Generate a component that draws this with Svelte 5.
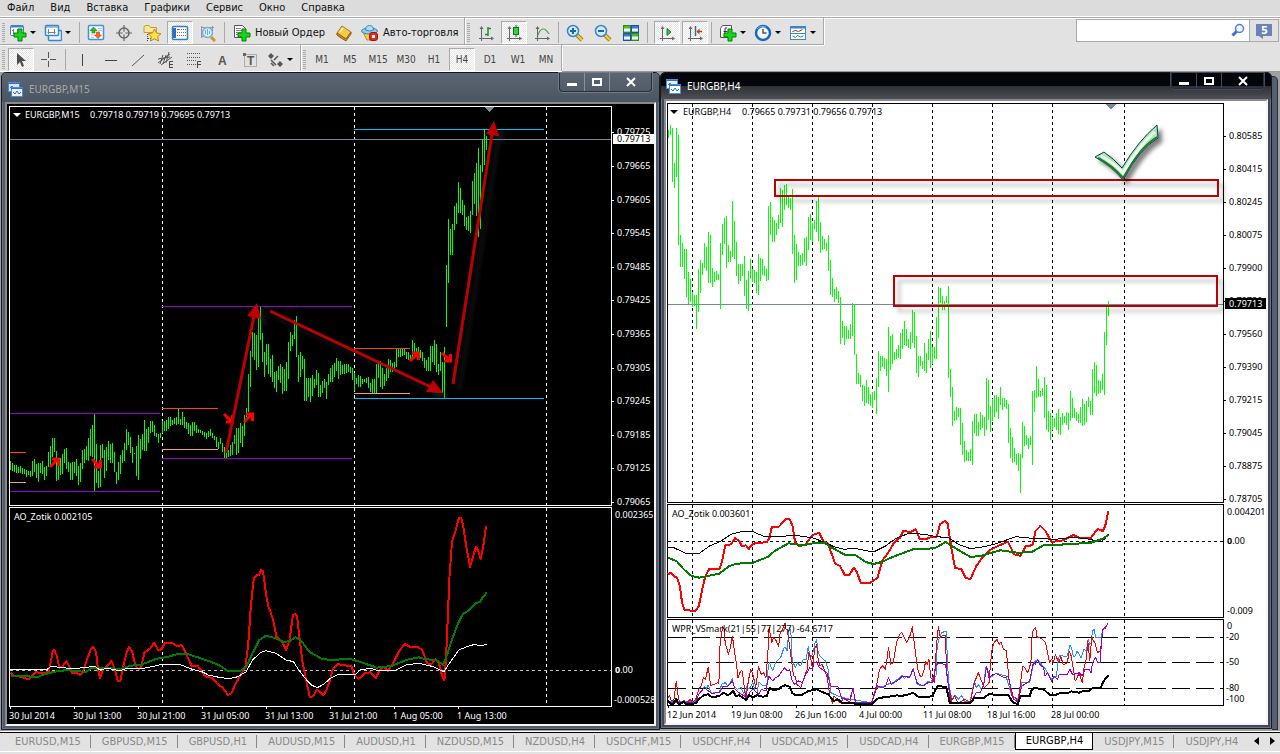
<script lang="ts">
  type Tool = { icon?: string; label?: string; title: string; drop?: boolean; pressed?: boolean; sep?: "thin" | "wide" };
  type Level = { x1: number; x2: number; y: number; color: string };

  const menu = ["Файл", "Вид", "Вставка", "Графики", "Сервис", "Окно", "Справка"];

  const standardBar: Tool[] = [
    { icon: "newchart", title: "Новый график", drop: true },
    { icon: "profiles", title: "Профили", drop: true, sep: "thin" },
    { icon: "market", title: "Обзор рынка" },
    { icon: "target", title: "Окно данных" },
    { icon: "navigator", title: "Навигатор" },
    { icon: "terminal", title: "Терминал", pressed: true },
    { icon: "tester", title: "Тестер стратегий", sep: "wide" },
    { icon: "order", title: "Новый Ордер", label: "Новый Ордер" },
    { icon: "book", title: "MetaEditor" },
    { icon: "auto", title: "Авто-торговля", label: "Авто-торговля" },
  ];

  const chartBar: Tool[] = [
    { icon: "bars", title: "Бары" },
    { icon: "candles", title: "Свечи", pressed: true },
    { icon: "line", title: "Линия", sep: "thin" },
    { icon: "zoomin", title: "Увеличить" },
    { icon: "zoomout", title: "Уменьшить" },
    { icon: "tile", title: "Выстроить окна", sep: "wide" },
    { icon: "scroll", title: "Автопрокрутка", pressed: true },
    { icon: "shift", title: "Сдвиг графика", pressed: true, sep: "wide" },
    { icon: "indicators", title: "Индикаторы", drop: true },
    { icon: "clock", title: "Периоды", drop: true },
    { icon: "template", title: "Шаблоны", drop: true },
  ];

  const lineBar: Tool[] = [
    { icon: "cursor", title: "Курсор", pressed: true },
    { icon: "cross", title: "Перекрестие", sep: "thin" },
    { icon: "vline", title: "Вертикальная линия" },
    { icon: "hline", title: "Горизонтальная линия" },
    { icon: "trend", title: "Трендовая линия" },
    { icon: "channel", title: "Равноудаленный канал" },
    { icon: "fibo", title: "Линии Фибоначчи" },
    { icon: "text", title: "Текст" },
    { icon: "label", title: "Текстовая метка" },
    { icon: "arrows", title: "Стрелки", drop: true },
  ];

  const periods = ["M1", "M5", "M15", "M30", "H1", "H4", "D1", "W1", "MN"];
  let period = $state("H4");

  const tabs = [
    "EURUSD,M15", "GBPUSD,M15", "GBPUSD,H1", "AUDUSD,M15", "AUDUSD,H1", "NZDUSD,M15", "NZDUSD,H4",
    "USDCHF,M15", "USDCHF,H4", "USDCAD,M15", "USDCAD,H4", "EURGBP,M15", "EURGBP,H4", "USDJPY,M15", "USDJPY,H4",
  ];
  let activeTab = $state("EURGBP,H4");

  // high/low pairs, one bar every two units
  const m15Bars = [
    461,470, 463,471, 465,472, 465,473, 467,473, 466,473, 468,474, 469,474, 470,477, 471,475, 471,477, 461,476,
    459,472, 464,478, 463,482, 463,473, 461,474, 467,480, 466,476, 452,467, 446,467, 438,457, 438,452, 451,481,
    458,480, 458,475, 454,474, 449,463, 448,469, 462,472, 463,480, 462,480, 462,473, 459,476, 466,485, 463,482,
    450,469, 449,463, 446,460, 438,461, 429,456, 425,457, 413,492, 444,483, 471,488, 445,487, 444,458, 450,478,
    447,471, 441,460, 444,463, 443,463, 452,472, 472,484, 462,480, 455,474, 450,463, 443,461, 429,450, 432,445,
    437,453, 447,463, 453,454, 446,476, 435,480, 439,459, 434,450, 420,451, 429,451, 427,443, 421,433, 421,432,
    425,436, 433,437, 434,443, 433,438, 421,433, 421,431, 420,431, 417,429, 417,426, 420,425, 418,424, 417,425,
    408,424, 419,425, 412,425, 417,428, 422,429, 423,434, 425,436, 422,436, 422,431, 425,433, 429,433, 430,433,
    431,435, 432,437, 433,439, 431,437, 429,436, 433,438, 436,440, 437,447, 442,449, 438,444, 443,452, 447,458,
    447,458, 450,457, 445,456, 442,455, 435,444, 428,455, 428,453, 423,443, 426,447, 415,436, 408,417, 374,412,
    351,387, 332,357, 333,360, 335,370, 317,367, 306,340, 333,362, 352,377, 344,365, 344,374, 359,377, 355,382,
    372,388, 371,392, 366,380, 364,383, 367,394, 369,391, 362,391, 342,379, 332,351, 335,346, 320,339, 316,357,
    355,382, 352,377, 356,369, 359,401, 378,401, 378,397, 378,402, 375,396, 379,388, 370,385, 373,397, 385,397,
    381,393, 379,388, 382,399, 374,385, 368,382, 365,382, 363,377, 358,371, 361,379, 361,375, 365,374, 364,374,
    364,373, 364,372, 367,373, 368,380, 373,391, 378,384, 375,387, 376,387, 379,384, 379,382, 378,383, 377,388,
    383,392, 379,393, 379,393, 364,393, 363,378, 361,387, 368,389, 374,386, 368,381, 359,378, 360,372, 363,372,
    362,369, 349,367, 349,357, 349,357, 349,356, 348,355, 352,359, 352,360, 355,361, 340,360, 343,353, 348,353,
    347,360, 350,358, 352,361, 358,368, 360,371, 357,371, 346,371, 346,362, 340,365, 344,372, 364,375, 352,371,
    362,393, 347,399, 265,327, 219,283, 229,255, 224,255, 206,230, 203,224, 182,213, 188,213, 200,215, 205,226,
    217,230, 216,231, 211,233, 181,215, 173,204, 163,216, 148,237, 165,229, 139,172, 129,165, 136,150,
  ];

  const h4Bars = [
    130,138, 125,135, 128,182, 163,188, 128,177, 135,245, 235,267, 243,267, 249,279, 249,297, 272,304, 279,302,
    292,307, 295,306, 295,329, 269,312, 260,293, 263,275, 243,268, 247,271, 232,283, 235,283, 268,287, 272,282,
    271,280, 274,280, 243,309, 224,255, 218,244, 216,268, 245,262, 251,262, 201,257, 221,259, 242,276, 264,284,
    264,281, 264,276, 256,296, 280,309, 271,311, 259,279, 269,282, 270,283, 272,293, 254,295, 258,281, 259,275,
    266,276, 269,281, 206,280, 202,235, 217,242, 220,242, 223,235, 215,229, 188,223, 190,227, 185,210, 184,205,
    196,208, 198,210, 189,254, 235,283, 244,280, 252,266, 255,266, 253,265, 238,262, 237,266, 217,250, 214,240,
    223,242, 220,229, 201,232, 196,241, 222,253, 236,250, 239,249, 243,251, 235,271, 260,295, 278,297, 289,302,
    287,299, 291,303, 297,344, 321,338, 326,345, 326,339, 330,339, 324,339, 303,336, 305,355, 354,384, 373,384,
    375,387, 385,401, 386,406, 380,403, 387,404, 394,406, 392,408, 391,400, 378,414, 351,387, 356,371, 356,367,
    358,369, 359,376, 327,392, 336,370, 334,364, 352,360, 349,359, 345,358, 333,359, 329,349, 321,345, 329,346,
    339,348, 332,349, 310,343, 312,348, 336,373, 356,377, 356,366, 361,369, 343,371, 353,373, 339,360, 331,368,
    347,364, 347,359, 317,359, 287,338, 288,303, 296,310, 301,310, 296,303, 286,378, 369,397, 387,426, 411,421,
    407,420, 408,417, 408,445, 423,455, 441,462, 450,461, 452,461, 449,461, 421,465, 414,433, 414,436, 422,436,
    412,430, 415,428, 417,436, 378,430, 380,420, 406,432, 399,421, 395,417, 395,412, 397,419, 387,405, 398,410,
    398,407, 400,409, 404,443, 428,458, 437,463, 448,462, 454,465, 453,471, 454,493, 422,458, 426,446, 435,445,
    438,449, 436,445, 391,465, 390,412, 366,398, 379,397, 391,397, 388,396, 377,418, 385,430, 411,432, 413,440,
    417,430, 418,427, 413,430, 409,434, 417,435, 413,425, 416,423, 412,425, 413,430, 391,421, 398,418, 408,418,
    412,421, 414,423, 407,423, 399,426, 404,425, 401,422, 397,407, 401,415, 369,415, 362,393, 365,396, 380,394,
    381,393, 374,390, 332,395, 306,345, 301,316,
  ];

  const m15Red = [25,518,33,528,50,530,68,538,85,516,100,520,115,516,120,490,125,455,129,449,135,468,141,503,148,500,158,484,165,500,172,520,180,518,190,524,197,515,207,478,215,450,222,440,228,455,233,510,238,534,245,507,255,498,265,482,272,505,280,543,286,542,292,505,300,460,307,441,314,455,322,498,330,508,336,498,343,458,357,445,366,428,376,450,384,448,391,430,410,430,420,438,432,436,440,455,455,497,470,498,487,528,505,535,515,550,528,562,542,585,550,580,560,550,572,525,583,500,590,430,596,320,603,235,610,225,616,224,620,211,625,213,633,290,638,320,648,355,657,410,670,425,680,450,688,420,696,345,702,342,706,350,712,420,718,480,728,545,736,592,745,588,752,570,758,572,768,586,775,572,783,545,790,510,802,492,815,496,835,498,842,525,852,537,866,520,880,517,893,535,902,510,910,500,922,513,936,485,950,450,962,433,975,441,992,440,1003,450,1015,490,1024,494,1035,478,1043,490,1050,525,1056,541,1060,470,1063,380,1068,230,1074,125,1082,95,1090,55,1096,55,1100,75,1108,140,1117,200,1125,165,1131,140,1137,155,1142,177,1148,140,1155,78];
  const m15Green = [25,528,60,528,88,532,100,525,130,515,160,510,180,514,205,515,218,503,230,506,260,503,285,508,310,497,335,494,350,487,372,476,400,470,420,463,445,462,470,472,500,485,520,495,540,512,570,514,585,500,600,460,616,420,632,407,655,415,675,427,690,422,702,412,715,422,735,455,765,477,790,480,830,476,855,485,895,503,930,498,965,480,995,472,1010,477,1040,482,1053,495,1062,465,1075,415,1090,365,1100,342,1115,330,1130,310,1140,306,1148,290,1157,277];
  const m15White = [25,508,60,510,90,508,110,510,120,500,150,502,165,506,200,503,225,499,235,508,260,506,285,512,300,506,325,507,350,503,385,493,430,495,455,507,480,515,495,525,520,532,545,536,565,530,585,515,600,480,620,457,632,452,655,460,680,480,697,485,710,510,725,535,740,555,754,563,770,552,785,535,805,522,845,524,855,510,880,505,900,513,940,511,965,495,995,490,1030,500,1055,516,1065,495,1090,450,1110,440,1128,433,1140,438,1156,433];

  const h4Red = [20,235,28,230,35,240,43,245,50,270,56,320,62,343,90,344,98,330,106,285,114,243,124,220,150,220,157,195,165,148,180,145,190,126,200,135,207,150,217,148,225,158,235,143,270,138,277,125,283,92,300,93,318,70,328,70,335,90,342,140,352,150,368,147,385,118,402,110,413,135,425,143,433,170,443,203,455,210,468,238,478,238,490,215,498,228,508,262,530,262,550,245,562,195,580,165,592,140,607,125,615,105,633,108,647,100,657,130,672,130,685,123,700,122,708,85,720,75,728,85,736,150,746,215,762,220,773,245,785,250,800,210,815,185,835,162,855,150,880,137,895,175,912,180,925,150,942,148,950,105,962,90,975,105,990,138,1020,133,1045,117,1060,125,1090,125,1107,99,1120,105,1126,90,1134,45];
  const h4Green = [20,185,42,195,60,220,80,240,100,245,120,240,150,233,175,210,195,203,235,200,272,183,290,165,325,142,360,148,395,140,415,140,435,155,470,178,495,178,520,198,540,204,560,198,590,182,640,160,695,157,722,138,745,155,785,183,810,180,860,163,905,170,940,168,970,148,1030,145,1090,140,1120,128,1134,117];
  const h4Black = [20,156,35,155,65,172,100,172,125,150,150,138,180,115,210,106,235,107,265,122,300,122,340,118,385,125,415,138,440,152,465,160,490,157,540,168,570,150,600,125,630,112,670,115,700,122,730,125,755,145,785,158,820,152,850,143,900,122,940,127,1000,130,1045,124,1080,128,1115,138,1125,128,1134,115];

  const wprRed = [20,605,24,598,28,612,35,615,41,555,47,610,52,622,60,612,66,622,76,610,82,620,90,610,98,580,104,570,110,545,115,550,122,514,128,568,136,566,145,560,149,562,152,440,156,412,158,392,162,400,165,440,173,475,178,455,183,420,190,480,193,500,197,545,202,530,207,522,212,560,217,610,224,550,230,520,236,540,242,575,249,512,256,535,262,530,268,545,273,470,276,395,283,440,287,425,292,430,300,452,304,410,308,405,316,380,319,402,322,400,330,470,338,540,342,540,346,565,356,575,365,545,372,520,376,470,380,480,386,520,391,460,396,445,400,490,405,510,410,505,415,520,422,540,430,600,436,622,440,600,445,605,455,620,464,608,480,618,488,575,494,618,535,622,545,580,550,555,555,520,563,510,570,520,574,490,578,455,584,505,590,500,598,440,606,415,611,410,616,420,624,440,632,420,638,392,645,460,652,520,658,540,663,540,668,520,672,495,676,505,680,490,685,545,694,560,699,450,704,392,709,425,716,418,721,418,726,540,735,618,745,600,750,614,755,622,770,610,785,618,795,560,805,530,820,575,832,560,836,500,840,460,845,440,852,430,858,445,862,438,868,458,876,465,882,545,890,600,895,612,900,605,905,618,912,560,917,510,922,515,930,530,938,500,941,420,944,400,950,395,954,425,958,425,966,428,975,440,985,500,990,490,995,500,1000,475,1008,500,1014,482,1020,507,1030,500,1035,465,1040,480,1045,515,1050,555,1055,545,1060,530,1068,560,1073,510,1078,490,1082,435,1087,495,1092,420,1096,435,1100,440,1106,470,1114,465,1120,400,1126,398,1133,382];
  const wprBlue = [20,615,55,618,90,615,100,590,106,585,112,572,117,578,122,568,130,592,150,588,156,565,165,560,172,570,183,548,187,570,195,580,205,575,215,600,220,570,225,580,235,560,240,585,245,590,250,558,260,570,270,568,274,510,277,500,285,525,292,500,300,490,306,482,312,460,316,452,322,465,325,410,328,395,331,410,334,490,342,515,348,500,355,510,362,492,370,490,375,450,380,490,388,465,392,440,396,432,400,470,405,480,412,488,418,495,425,520,432,590,450,600,480,610,535,620,548,575,562,572,575,565,590,560,600,550,607,545,613,538,618,548,625,540,632,545,640,518,645,540,650,565,665,570,672,562,680,555,686,560,690,545,698,540,701,450,704,435,712,410,724,405,727,500,730,560,738,610,746,598,755,610,762,598,770,615,785,615,790,580,795,555,800,575,805,565,812,580,818,570,825,510,835,545,850,532,875,540,890,600,905,610,915,560,935,560,945,500,955,490,975,520,990,550,1003,540,1006,500,1010,478,1018,480,1030,480,1037,447,1041,455,1045,480,1050,480,1055,465,1060,475,1065,485,1072,460,1078,465,1083,430,1087,445,1090,440,1094,405,1098,400,1102,425,1115,425,1120,400];
  const wprPurple = [20,618,90,618,98,595,112,575,130,592,150,590,160,570,172,570,183,555,190,580,200,590,218,605,228,588,235,580,250,595,256,580,268,585,275,540,285,555,292,545,300,540,307,528,315,515,322,525,328,520,333,550,340,565,350,555,360,560,366,540,372,530,378,515,385,520,390,500,396,497,403,515,410,520,422,530,432,570,450,572,460,608,480,610,488,580,495,620,535,620,550,570,562,575,570,572,578,545,585,565,595,558,605,550,613,540,620,540,630,545,640,520,650,560,665,570,678,560,690,560,697,510,703,502,722,505,728,560,738,618,785,620,800,590,810,590,820,560,826,510,832,545,840,538,850,532,870,545,880,540,895,610,905,618,915,570,935,555,942,510,945,500,950,505,955,490,960,505,970,515,974,540,980,530,990,555,996,540,1005,550,1010,535,1030,535,1037,520,1043,535,1060,530,1068,540,1075,520,1085,520,1090,530,1094,500,1098,490,1102,485,1107,500,1113,500,1117,430,1120,400,1133,383];
  const wprBlack = [20,615,28,625,33,625,41,608,47,625,60,618,68,625,90,622,100,608,110,598,122,595,132,604,150,600,160,590,172,598,185,585,192,600,200,598,218,612,225,598,235,604,245,598,260,602,270,600,277,575,285,582,300,580,306,573,316,568,328,572,334,590,340,596,360,596,375,585,396,580,410,588,425,595,440,615,450,610,460,622,488,620,495,625,535,625,550,608,565,604,580,602,600,598,610,600,625,596,640,590,655,604,670,604,690,600,697,580,703,570,724,573,729,600,733,620,785,622,795,605,820,605,832,594,850,597,880,596,890,615,895,620,905,625,912,600,935,600,940,582,945,576,970,580,985,596,1000,597,1010,592,1030,592,1040,586,1060,590,1072,584,1085,585,1095,575,1115,575,1120,560,1125,550,1134,538];

  function barPath(bars: number[], x0: number): string {
    let d = "";
    for (let i = 0; i < bars.length; i += 2) {
      d += `M${x0 + i + 0.5} ${bars[i]}V${bars[i + 1]}`;
    }
    return d;
  }

  // indicator samples are stored in a finer unit than the bars
  function trace(pts: number[], x0: number, y0: number, unit: number): string {
    const out: string[] = [];
    for (let i = 0; i < pts.length; i += 2) {
      out.push(`${(x0 + pts[i] / unit).toFixed(1)},${(y0 + pts[i + 1] / 3).toFixed(1)}`);
    }
    return out.join(" ");
  }

  const m15Levels: Level[] = [
    { x1: 10, x2: 160, y: 413, color: "#9400d3" },
    { x1: 10, x2: 160, y: 491, color: "#9400d3" },
    { x1: 10, x2: 26, y: 452, color: "#ff4500" },
    { x1: 10, x2: 26, y: 482, color: "#f4a460" },
    { x1: 162, x2: 352, y: 306, color: "#9400d3" },
    { x1: 162, x2: 352, y: 458, color: "#9400d3" },
    { x1: 162, x2: 218, y: 408, color: "#ff4500" },
    { x1: 162, x2: 218, y: 449, color: "#f4a460" },
    { x1: 354, x2: 544, y: 129, color: "#00bfff" },
    { x1: 354, x2: 544, y: 398, color: "#00bfff" },
    { x1: 354, x2: 410, y: 348, color: "#ff4500" },
    { x1: 354, x2: 410, y: 393, color: "#f4a460" },
  ];

  const m15Prices: [string, number][] = [
    ["0.79725", 132], ["0.79665", 166], ["0.79605", 200], ["0.79545", 233], ["0.79485", 267], ["0.79425", 300],
    ["0.79365", 334], ["0.79305", 368], ["0.79245", 401], ["0.79185", 435], ["0.79125", 468], ["0.79065", 502],
  ];
  const h4Prices: [string, number][] = [
    ["0.80585", 136], ["0.80415", 169], ["0.80245", 202], ["0.80075", 235], ["0.79900", 268], ["0.79730", 301],
    ["0.79560", 334], ["0.79390", 367], ["0.79215", 400], ["0.79045", 433], ["0.78875", 466], ["0.78705", 499],
  ];
  const m15Times = ["30 Jul 2014", "30 Jul 13:00", "30 Jul 21:00", "31 Jul 05:00", "31 Jul 13:00", "31 Jul 21:00", "1 Aug 05:00", "1 Aug 13:00"];
  const h4Times = ["12 Jun 2014", "19 Jun 08:00", "26 Jun 16:00", "4 Jul 00:00", "11 Jul 08:00", "18 Jul 16:00", "28 Jul 00:00"];

  const m15Grid = [162, 354, 546];
  const h4Grid = [692, 752, 812, 872, 932, 992, 1052, 1124];

  const signals = [
    { x: 49, y: 457, up: true },
    { x: 91, y: 458, up: false },
    { x: 223, y: 413, up: false },
    { x: 243, y: 412, up: true },
    { x: 409, y: 351, up: true },
    { x: 441, y: 352, up: false },
  ];
</script>

{#snippet plus(x: number, y: number)}
  <path d="M{x + 4} {y}h4v4h4v4h-4v4h-4v-4h-4v-4h4z" fill="#16d916" stroke="#087a12" />
{/snippet}

{#snippet axes()}
  <path d="M4.5 3v14M2 14.500h14" stroke="#666" fill="none" />
  <path d="M2.500 5l2-3 2 3zM14 12.500l3 2-3 2z" fill="#666" />
{/snippet}

{#snippet lens(sign: string)}
  <path d="M11 11l5 5" stroke="#8a6a10" stroke-width="4" />
  <path d="M11 11l5 5" stroke="#f0c83c" stroke-width="2.500" />
  <circle cx="7" cy="7" r="5.500" fill="#c9ecff" stroke="#3b83c4" stroke-width="1.500" />
  <path d={sign} stroke="#2160a8" stroke-width="2" />
{/snippet}

{#snippet icon(name: string)}
  <svg class="icon" viewBox="0 0 18 18" width="18" height="18" aria-hidden="true">
    {#if name === "newchart"}
      <rect x="1.500" y="1.500" width="13" height="10" rx="1" fill="#fff" stroke="#3a86c8" />
      <path d="M2 2.500h12" stroke="#3a86c8" stroke-width="2" />
      <path d="M4.500 5v5M3 6.500h2M8.500 5v5M8 8.500h2" stroke="#6e8494" />
      {@render plus(5, 5)}
    {:else if name === "profiles"}
      <rect x="4.500" y="6.500" width="13" height="10" rx="1" fill="#e8f4ff" stroke="#3a86c8" stroke-width="1.500" />
      <rect x="1.500" y="1.500" width="13" height="10" rx="1" fill="#fff" stroke="#3a86c8" stroke-width="1.500" />
      <path d="M2 3h12" stroke="#3a86c8" />
      <path d="M4.500 5v5M3.500 8.500h8M10.500 5v5" stroke="#6e8494" />
    {:else if name === "market"}
      <rect x="1.500" y="1.500" width="15" height="14" rx="1" fill="#fff" stroke="#3f93d8" stroke-width="1.500" />
      <path d="M4 11h3M4 13.500h3M11 4.500h4M11 6.500h4" stroke="#b8c4cc" />
      <path d="M6.500 3l3.500 3.500H8V9H5V6.500H3z" fill="#31b531" stroke="#137313" stroke-width=".6" />
      <path d="M11 14.500L7.500 11H9.500V8h3v3h2z" fill="#ff6a28" stroke="#b23a08" stroke-width=".6" />
    {:else if name === "target"}
      <circle cx="9" cy="9" r="5" fill="none" stroke="#666" stroke-width="1.500" />
      <path d="M9 1v16M1 9h16" stroke="#666" stroke-width="1.200" />
      <circle cx="9" cy="9" r="1.500" fill="#e2e2e2" />
    {:else if name === "navigator"}
      <path d="M1 3.500q0-2 2-2h3l1.500 2h6v5H1z" fill="#fbe69a" stroke="#c99a26" />
      <path d="M4.500 10v7M5 14.500h3" stroke="#444" stroke-dasharray="1 1" />
      <path d="M11.500 5l2 4 4.500.6-3.300 3 .8 4.400-4-2.200-4 2.200.8-4.400-3.300-3 4.500-.6z" fill="#ffdf4e" stroke="#b98a16" />
    {:else if name === "terminal"}
      <rect x="1.500" y="2.500" width="15" height="13" rx="1" fill="#fff" stroke="#2c7fc9" stroke-width="1.500" />
      <path d="M3.500 4v10" stroke="#2c6fb4" stroke-width="3" />
      <path d="M6 5.500h2M6 8.500h1M6 11.500h1" stroke="#e03030" />
      <path d="M8 5.500h7M8 8.500h7M8 11.500h7" stroke="#777" stroke-dasharray="1 1" />
    {:else if name === "tester"}
      <path d="M2.500 2v12M2 3.500h13M13.500 2v9M2 12.500h8" stroke="#8b98a4" />
      <path d="M12 13l4 4" stroke="#c99a20" stroke-width="3" />
      <circle cx="8.500" cy="8.500" r="5" fill="#d4edfb" stroke="#7aaed6" stroke-width="1.500" />
      <path d="M6.500 6v4M8.500 5v6M10.500 7v3" stroke="#7da8c4" />
    {:else if name === "order"}
      <path d="M1.500 1.500h8l3 3v9h-11z" fill="#fff" stroke="#555" />
      <path d="M3 4.500h5M3 6.500h7M3 8.500h5M3 10.500h4" stroke="#888" />
      {@render plus(5, 5)}
    {:else if name === "book"}
      <path d="M2 9l5-7 9 6-5 7z" fill="#f5ca4a" stroke="#a87812" />
      <path d="M2 9q-1 2 1 3l8 5 5-7v-2l-5 7z" fill="#c98e18" stroke="#8f6410" />
      <path d="M5 8l3-4" stroke="#fff0b0" stroke-width="1.500" />
    {:else if name === "auto"}
      <path d="M2 8h13l-4 8H6z" fill="#f6cf42" stroke="#b58a18" />
      <ellipse cx="8.500" cy="7" rx="8" ry="3" fill="#8fcdf0" stroke="#3c86b8" />
      <path d="M4.500 6q0-4.500 4-4.500t4 4.500q-4 2-8 0z" fill="#a9def8" stroke="#3c86b8" />
      <rect x="8.500" y="8.500" width="8" height="8" rx="2.500" fill="#e22c1c" stroke="#a01208" />
      <rect x="11" y="11" width="3" height="3" fill="#fff" />
    {:else if name === "bars"}
      {@render axes()}
      <path d="M11 3v9M11 4.500h3M8 10.500h3" stroke="#15962a" stroke-width="1.500" />
    {:else if name === "candles"}
      {@render axes()}
      <path d="M11 1v12" stroke="#0b7a1c" />
      <rect x="8.500" y="3.500" width="5" height="7" fill="#31d43c" stroke="#0b7a1c" />
    {:else if name === "line"}
      {@render axes()}
      <path d="M5 11q2-6 5-6t6 5" stroke="#4ea052" stroke-width="1.200" fill="none" />
    {:else if name === "zoomin"}
      {@render lens("M4 7h6M7 4v6")}
    {:else if name === "zoomout"}
      {@render lens("M4 7h6")}
    {:else if name === "tile"}
      <rect x="1.500" y="1.500" width="7" height="7" fill="#4cba2c" stroke="#2f8f14" />
      <rect x="9.500" y="1.500" width="7" height="7" fill="#3d74d8" stroke="#1f4fae" />
      <rect x="1.500" y="9.500" width="7" height="7" fill="#3d74d8" stroke="#1f4fae" />
      <rect x="9.500" y="9.500" width="7" height="7" fill="#4cba2c" stroke="#2f8f14" />
      <path d="M2 6h6M10 6h6M2 14h6M10 14h6" stroke="#eef6ff" stroke-width="3" />
    {:else if name === "scroll"}
      {@render axes()}
      <path d="M9 4.500l4 3.500-4 3.500z" fill="#3cc44a" stroke="#0f8020" />
    {:else if name === "shift"}
      {@render axes()}
      <path d="M9.500 2v10" stroke="#2a6f96" stroke-width="1.500" />
      <path d="M11 7.500h5" stroke="#b03a10" stroke-width="1.500" />
      <path d="M10.500 7.500l3-3v6z" fill="#d2400e" />
    {:else if name === "indicators"}
      <path d="M3.500 1.500h9v12h-11v-9z" fill="#fff" stroke="#555" />
      <path d="M8 4q-2-1-2 1v6M4.500 7.500h4" stroke="#333" fill="none" />
      {@render plus(5, 5)}
    {:else if name === "clock"}
      <circle cx="9" cy="9" r="7" fill="#eef7ff" stroke="#1767bd" stroke-width="2.500" />
      <path d="M3 5q3-4 9-2" stroke="#6cb6f2" fill="none" />
      <path d="M9 5v4h3.500" stroke="#555" stroke-width="1.500" fill="none" />
    {:else if name === "template"}
      <rect x="1.500" y="2.500" width="15" height="13" fill="#fff" stroke="#3a86c8" />
      <path d="M1 3.500h16" stroke="#3a86c8" stroke-width="2" />
      <path d="M2 9.500h14" stroke="#3a86c8" />
      <path d="M3.500 7.500l3-1 3 1 4-2" stroke="#a0342c" fill="none" />
      <path d="M3.500 12l3 1.500 2-2 3 1.500 3-1" stroke="#2a9a3c" fill="none" />
    {:else if name === "cursor"}
      <path d="M5 2v12l3-3 2 5 2-1-2-5h4z" fill="#4c4c4c" />
    {:else if name === "cross"}
      <path d="M8.500 1v6M8.500 10v6M1 8.500h6M10 8.500h6" stroke="#555" />
    {:else if name === "vline"}
      <path d="M9.500 3v12" stroke="#444" />
    {:else if name === "hline"}
      <path d="M4 9.500h12" stroke="#444" />
    {:else if name === "trend"}
      <path d="M3 15L15 4" stroke="#555" />
    {:else if name === "channel"}
      <path d="M1 12L13 3M4 14l11-8M1 8l12-2M3 13l3-9M6 13l3-9M9 12l3-11" stroke="#555" />
      <path d="M16 10.500h-3.500v6H16M13 13.500h3" stroke="#444" fill="none" />
    {:else if name === "fibo"}
      <path d="M2 2.500h14M2 6.500h14M2 9.500h9M2 13.500h9" stroke="#555" stroke-dasharray="1 1" />
      <path d="M16 10.500h-3.500V17M13 13.500h3" stroke="#444" fill="none" />
    {:else if name === "text"}
      <text x="5" y="14" class="glyph">A</text>
    {:else if name === "label"}
      <rect x="3.500" y="3.500" width="12" height="12" fill="none" stroke="#777" stroke-dasharray="1 1" />
      <rect x="2" y="2" width="3" height="3" fill="#666" />
      <text x="6" y="14" class="glyph">T</text>
    {:else if name === "arrows"}
      <path d="M5 2l3 3-3 3-3-3zM14 10l3 3-3 3-3-3z" fill="#555" />
      <path d="M8 9l4-4M5 9l5 5M5 12l3 3" stroke="#555" stroke-width="1.500" fill="none" />
    {/if}
  </svg>
{/snippet}

{#snippet toolbar(items: Tool[], name: string)}
  <div class="toolbar" role="toolbar" aria-label={name}>
    <span class="grip"></span>
    {#each items as t (t.title)}
      <button type="button" class="tool" class:drop={t.drop} class:labelled={t.label} class:pressed={t.pressed} title={t.title} aria-label={t.title}>
        {@render icon(t.icon ?? "")}
        {#if t.label}<span>{t.label}</span>{/if}
        {#if t.drop}<span class="caret"></span>{/if}
      </button>
      {#if t.sep}<span class="sep {t.sep}"></span>{/if}
    {/each}
  </div>
{/snippet}

{#snippet titleBar(name: string)}
  <header class="title">
    <svg viewBox="0 0 15 15" width="15" height="15" aria-hidden="true">
      <rect x=".5" y=".5" width="11" height="9" fill="#e8f2ff" stroke="#4d8fe0" />
      <path d="M0 1.500h12M2 6l2-2 2 3 2-2" stroke="#2f6fd0" fill="none" />
      <rect x="3.500" y="5.500" width="11" height="9" fill="#fff" stroke="#4d8fe0" />
      <path d="M3 6.500h12M5 10l2 2 2-3 2 3 2-2" stroke="#2f6fd0" fill="none" />
    </svg>
    <h2>{name}</h2>
    <div class="controls">
      <button type="button" aria-label="Свернуть"><svg viewBox="0 0 12 10" width="12" height="10"><path d="M1 7.500h10" stroke="#fff" stroke-width="3" /></svg></button>
      <button type="button" aria-label="Развернуть"><svg viewBox="0 0 12 10" width="12" height="10"><rect x="2" y="2" width="8" height="6" fill="none" stroke="#fff" stroke-width="2" /></svg></button>
      <button type="button" class="close" aria-label="Закрыть"><svg viewBox="0 0 12 10" width="12" height="10"><path d="M2 1l8 8M10 1L2 9" stroke="#fff" stroke-width="2" /></svg></button>
    </div>
  </header>
{/snippet}

{#snippet priceAxis(prices: [string, number][], x: number)}
  {#each prices as [price, y] (price)}
    <path d="M{x} {y + 0.5}h3" class="ink" />
    <text x={x + 6} y={y + 3}>{price}</text>
  {/each}
{/snippet}

{#snippet timeAxis(times: string[], x: number, y: number)}
  {#each times as time, i (time)}
    <path d="M{x + i * 64 + 0.5} {y}v3" class="ink" />
    <text x={x + i * 64 - 1} y={y + 13}>{time}</text>
  {/each}
{/snippet}

<div class="terminal">
  <nav class="menu">
    {#each menu as item (item)}
      <button type="button">{item}</button>
    {/each}
  </nav>

  <div class="bars">
    <div class="bar-rows">
      <div class="bar-row">
        {@render toolbar(standardBar, "Стандартная")}
        {@render toolbar(chartBar, "Графики")}
      </div>
      <div class="bar-row">
        {@render toolbar(lineBar, "Инструменты")}
        <div class="toolbar" role="toolbar" aria-label="Периоды">
          <span class="grip"></span>
          {#each periods as p (p)}
            <button type="button" class="tool period" class:pressed={period === p} onclick={() => (period = p)}>{p}</button>
          {/each}
        </div>
      </div>
    </div>
    <form class="search" onsubmit={(e) => e.preventDefault()}>
      <input type="search" aria-label="Поиск" />
      <svg class="search-icon" viewBox="0 0 14 14" width="14" height="14" aria-hidden="true">
        <path d="M1.500 12.500L6 8" stroke="#3a6fd8" stroke-width="3" />
        <circle cx="8.500" cy="5.500" r="4" fill="#f4f9ff" stroke="#4a7ee0" stroke-width="1.500" />
      </svg>
      <button type="button" class="chat" aria-label="Сообщения: 5">
        <svg viewBox="0 0 18 18" width="18" height="18">
          <path d="M1 2h16v12H8v3l-4-3H1z" fill="#6a84b8" />
          <text x="6" y="12" class="count">5</text>
        </svg>
      </button>
    </form>
  </div>

  <main class="desktop">
    <section class="window">
      {@render titleBar("EURGBP,M15")}
      <svg class="chart dark" viewBox="7 104 647 620" role="img" aria-label="EURGBP,M15">
        <defs>
          <filter id="soft" x="-20%" y="-20%" width="150%" height="150%">
            <feDropShadow dx="6" dy="6" stdDeviation="2" flood-color="#444" flood-opacity=".3" />
          </filter>
        </defs>
        <g class="crisp">
          <path d="M9.500 505.500V106.500H611.500V505.500zM9.500 507.500H611.500V706.500H9.500z" class="ink" />
          {#each m15Grid as x (x)}
            <path d="M{x + 0.5} 107V505M{x + 0.5} 508V706" class="ink" stroke-dasharray="3 3" />
          {/each}
          <path d="M10 670.500H611" stroke="#c0c0c0" stroke-dasharray="3 3" />
          <path d="M10 139.500H611" stroke="#778899" />
          <path d={barPath(m15Bars, 10)} stroke="#0f0" />
          {#each m15Levels as l (`${l.x1}:${l.y}`)}
            <path d="M{l.x1} {l.y + 0.5}H{l.x2}" stroke={l.color} />
          {/each}
          <path d="M484 107h10l-5 5z" fill="#778899" />
        </g>

        <polyline points={trace(m15Red, 0, 500, 2.376)} stroke="#f00" stroke-width="2" />
        <polyline points={trace(m15Green, 0, 500, 2.376)} stroke="#007d00" stroke-width="2" />
        <polyline points={trace(m15White, 0, 500, 2.376)} stroke="#fff" />

        {#each signals as s (s.x)}
          <path
            transform="translate({s.x} {s.y})"
            d={s.up ? "M1 10L9 2M3 2H9.500V9" : "M1 1L9 9M3 9H9.500V2"}
            stroke="#f00"
            stroke-width="3"
            fill="none"
          />
        {/each}

        <g filter="url(#soft)" stroke="#c00000" stroke-width="3" fill="#c00000">
          <path d="M226 453L254 316" />
          <path d="M257 303L247 316L261 319z" stroke="none" />
          <path d="M270 311L431 387" />
          <path d="M443 393L433 380L426 392z" stroke="none" />
          <path d="M453 384L492 134" />
          <path d="M494 121L486 134L499 136z" stroke="none" />
        </g>

        {@render priceAxis(m15Prices, 611)}
        <rect x="613" y="134" width="41" height="10" fill="#fff" />
        <text x="617" y="142" class="inverse">0.79713</text>
        <text x="615" y="518">0.002365</text>
        <text x="615" y="673"><tspan class="zero">0</tspan>.00</text>
        <text x="614" y="703">-0.000528</text>
        {@render timeAxis(m15Times, 10, 706)}
        <path d="M13 113h8l-4 4z" fill="#fff" />
        <text x="25" y="118">EURGBP,M15</text>
        <text x="90" y="118">0.79718 0.79719 0.79695 0.79713</text>
        <text x="14" y="520">AO_Zotik 0.002105</text>
      </svg>
    </section>

    <section class="window active">
      {@render titleBar("EURGBP,H4")}
      <svg class="chart light" viewBox="666 101 600 622" role="img" aria-label="EURGBP,H4">
        <defs>
          <filter id="zone" x="-5%" y="-30%" width="110%" height="200%">
            <feDropShadow dx="5" dy="5" stdDeviation="2" flood-color="#000" flood-opacity=".3" />
          </filter>
          <filter id="lift" x="-10%" y="-10%" width="140%" height="140%">
            <feDropShadow dx="4" dy="4" stdDeviation="2" flood-color="#000" flood-opacity=".5" />
          </filter>
        </defs>
        <g class="crisp">
          <path d="M667.500 502.500V103.500H1223.500V502.500zM667.500 504.500H1223.500V617.500H667.500zM667.500 619.500H1223.500V705.500H667.500z" class="ink" />
          {#each h4Grid as x (x)}
            <path d="M{x + 0.5} 104V502M{x + 0.5} 505V617M{x + 0.5} 620V705" class="ink" stroke-dasharray="3 3" />
          {/each}
          <path d="M668 541.500H1223" class="ink" stroke-dasharray="3 3" />
          <path d="M668 637.500H1223M668 662.500H1223M668 688.500H1223" class="ink" stroke-dasharray="18 6" />
          <path d="M668 304.500H1223" stroke="#778899" />
          <path d={barPath(h4Bars, 668)} stroke="#0f0" />
          <path d="M1105 104h11l-5 5z" fill="#778899" />
        </g>

        <polyline points={trace(h4Red, 660, 496, 2.529)} stroke="#f00" stroke-width="2" />
        <polyline points={trace(h4Black, 660, 496, 2.529)} stroke="#000" />
        <polyline points={trace(h4Green, 660, 496, 2.529)} stroke="#007d00" stroke-width="2" />

        <polyline points={trace(wprBlue, 660, 496, 2.529)} stroke="#1e90ff" />
        <polyline points={trace(wprRed, 660, 496, 2.529)} stroke="#f00000" />
        <polyline points={trace(wprPurple, 660, 496, 2.529)} stroke="#9400d3" />
        <polyline points={trace(wprBlack, 660, 496, 2.529)} stroke="#000" stroke-width="2" />

        <g filter="url(#zone)" fill="none" stroke="#c00000" stroke-width="2">
          <rect x="775" y="180" width="443" height="16" />
          <rect x="894" y="276" width="323" height="30" />
        </g>
        <g filter="url(#lift)">
          <path d="M1095 157L1104 152Q1114 159 1122 168Q1138 141 1157 125L1158 138Q1140 148 1123 180Q1112 166 1095 157z" fill="#9df09d" stroke="#15306a" />
          <path d="M1098 158Q1113 166 1123 178Q1139 148 1157 137" fill="none" stroke="#1e7a2e" stroke-width="2" />
          <path d="M1101 156Q1113 162 1123 173Q1139 145 1155 132" fill="none" stroke="#f6fff6" stroke-width="3" />
        </g>

        {@render priceAxis(h4Prices, 1223)}
        <rect x="1225" y="298" width="41" height="11" fill="#000" />
        <text x="1229" y="307" class="inverse">0.79713</text>
        <text x="1227" y="515">0.004201</text>
        <text x="1227" y="544"><tspan class="zero">0</tspan>.00</text>
        <text x="1227" y="614">-0.009</text>
        <text x="1227" y="629">0</text>
        <text x="1226" y="640">-20</text>
        <text x="1226" y="665">-50</text>
        <text x="1226" y="691">-80</text>
        <text x="1226" y="702">-100</text>
        {@render timeAxis(h4Times, 668, 705)}
        <path d="M670 110h8l-4 4z" />
        <text x="683" y="115">EURGBP,H4</text>
        <text x="742" y="115">0.79665 0.79731 0.79656 0.79713</text>
        <text x="672" y="517">AO_Zotik 0.003601</text>
        <text x="672" y="632">WPR_VSmark(21|55|77|277) -64.6717</text>
      </svg>
    </section>

    <div class="behind"></div>
  </main>

  <footer class="tabs">
    <div class="tab-list">
      {#each tabs as tab (tab)}
        <button type="button" class="tab" class:active={activeTab === tab} onclick={() => (activeTab = tab)}>{tab}</button>
      {/each}
    </div>
    <button type="button" class="page" aria-label="Назад"><svg viewBox="0 0 5 8" width="5" height="8"><path d="M5 0v8L0 4z" /></svg></button>
    <button type="button" class="page" aria-label="Вперед"><svg viewBox="0 0 5 8" width="5" height="8"><path d="M0 0v8l5-4z" /></svg></button>
  </footer>
</div>

<style>
  :global(body) {
    margin: 0;
    background: #e2e2e2;
  }

  .terminal {
    font-family: "DejaVu Sans Condensed", "DejaVu Sans", "Noto Sans", sans-serif;
    font-size: 11px;
    color: #111;
    background: #e2e2e2;
    overflow: hidden;
  }

  button {
    padding: 0;
    border: 0;
    background: none;
    color: inherit;
    font: inherit;
  }

  .menu {
    display: flex;
    gap: 16px;
    height: 16px;
    padding-left: 7px;
    background: #dcdcdc;
    border-bottom: 1px solid #fff;
  }
  .menu button {
    line-height: 14px;
    height: 15px;
  }

  .bars {
    display: flex;
    justify-content: space-between;
    height: 53px;
    border-top: 1px solid #aaa;
    border-bottom: 1px solid #999;
    box-shadow: inset 0 1px #fff;
  }
  .bar-row {
    display: flex;
    width: max-content;
    height: 26px;
    border-bottom: 1px solid #aaa;
    border-right: 1px solid #aaa;
    box-shadow: 0 1px #fff, 1px 0 #fff;
  }
  .bar-row + .bar-row {
    border-bottom: 0;
  }

  .toolbar {
    display: flex;
    align-items: center;
    padding-top: 3px;
  }
  .toolbar + .toolbar {
    border-left: 1px solid #aaa;
    box-shadow: inset 1px 0 #fff;
  }
  .grip {
    width: 3px;
    height: 20px;
    margin: 0 3px 0 2px;
    background: repeating-linear-gradient(#aaa 0 1px, transparent 1px 2px);
  }

  .tool {
    display: flex;
    flex: none;
    align-items: center;
    justify-content: center;
    width: 26px;
    height: 23px;
    margin-right: 2px;
    box-sizing: border-box;
  }
  .tool.drop {
    justify-content: flex-start;
    gap: 3px;
    width: 33px;
    padding-left: 1px;
  }
  .tool.labelled {
    gap: 4px;
    width: auto;
    padding: 0 4px 0 2px;
  }
  .tool.pressed {
    background: repeating-conic-gradient(#fff 0 25%, #e6e6e6 0 50%) 0 0 / 2px 2px;
    border: 1px solid;
    border-color: #aaa #fff #fff #aaa;
  }
  .tool.period {
    font-size: 10px;
    color: #444;
  }
  .icon {
    flex: none;
  }
  .glyph {
    font: bold 12px "Liberation Sans", sans-serif;
    fill: #555;
  }
  .caret {
    border: 3px solid transparent;
    border-top-color: #000;
    border-bottom: 0;
  }
  .sep {
    width: 1px;
    height: 21px;
    background: #aaa;
    margin: 0 3px 0 1px;
  }
  .sep.wide {
    margin-right: 6px;
  }

  .search {
    position: relative;
    display: flex;
    height: 23px;
    margin: 1px 1px 0 0;
  }
  .search input {
    width: 174px;
    box-sizing: border-box;
    padding: 0 24px 0 4px;
    border: 1px solid #aaa;
    background: #fff;
    font: inherit;
    appearance: none;
  }
  .search-icon {
    position: absolute;
    top: 4px;
    right: 34px;
  }
  .chat {
    display: flex;
    align-items: center;
    justify-content: center;
    width: 29px;
    border: 1px solid #aaa;
    border-left: 0;
  }
  .count {
    font-size: 11px;
    font-weight: bold;
    fill: #fff;
  }

  .desktop {
    display: grid;
    grid-template-columns: 659fr 612fr 6px;
    align-items: start;
    padding: 0 2px 1px 1px;
    background: #a0a0a0;
    border-bottom: 1px solid #fff;
  }

  .window {
    padding: 0 3px 3px;
    border: 1px solid #15181e;
    border-radius: 5px 5px 0 0;
    background: #505a68;
    box-shadow: inset 0 0 0 1px #6a7488;
  }
  .window.active {
    background: #43475a;
  }

  .title {
    display: flex;
    align-items: center;
    gap: 6px;
    height: 29px;
    margin: 0 -3px;
    padding-left: 6px;
    border-radius: 4px 4px 0 0;
    background: linear-gradient(#5c6672, #4a5563);
  }
  .title > svg {
    opacity: 0.9;
    margin-top: 3px;
  }
  .title h2 {
    flex: 1;
    margin: 2px 0 0;
    font: 10px "Noto Sans", sans-serif;
    color: #a9a9a5;
  }
  .active .title {
    height: 26px;
    padding-left: 5px;
    background: linear-gradient(#04060c 50%, #2f3235 52%, #4c5056);
  }
  .active .title h2 {
    margin-top: 0;
    color: #fff;
  }
  .active .title > svg {
    margin-top: 0;
    opacity: 1;
  }

  .controls {
    display: flex;
    align-self: flex-start;
    height: 18px;
    margin-right: 7px;
    border: 1px solid #262d38;
    border-top: 0;
    border-radius: 0 0 4px 4px;
    box-shadow: 0 0 0 1px #727c8b;
  }
  .controls button {
    display: grid;
    place-items: center;
    width: 25px;
    border-right: 1px solid #8791a0;
  }
  .controls .close {
    width: 41px;
    border-right: 0;
  }
  .active .controls {
    height: 15px;
    box-shadow: 0 0 0 1px #454a5e;
  }
  .active .controls button {
    border-color: #454a5e;
  }

  .chart {
    display: block;
    width: 100%;
    height: auto;
    box-sizing: border-box;
    border: 2px solid;
    border-color: #8a8a8a #f4f4f4 #f4f4f4 #8a8a8a;
    font: 9px "Noto Sans", sans-serif;
  }
  .chart.dark {
    background: #000;
    fill: #fff;
  }
  .chart.light {
    background: #fff;
    fill: #000;
  }
  .chart polyline {
    fill: none;
    stroke-linejoin: round;
    shape-rendering: crispEdges;
  }
  .ink {
    fill: none;
    shape-rendering: crispEdges;
  }
  .dark .ink {
    stroke: #fff;
  }
  .light .ink {
    stroke: #000;
  }
  .crisp {
    shape-rendering: crispEdges;
  }
  .dark .inverse {
    fill: #000;
  }
  .light .inverse {
    fill: #fff;
  }
  .zero {
    font-weight: bold;
  }

  .behind {
    align-self: stretch;
    margin-top: 4px;
    border: 1px solid #2a2e3a;
    border-left: 0;
    border-radius: 0 5px 0 0;
    background: #566072;
  }

  .tabs {
    display: flex;
    align-items: flex-start;
    height: 18px;
    border-top: 1px solid #000;
    border-bottom: 1px solid #fff;
  }
  .tab-list {
    display: flex;
    flex: 1;
    min-width: 0;
    overflow: hidden;
    padding-left: 4px;
  }
  .tab {
    flex: none;
    height: 17px;
    padding: 0 10px 0 11px;
    line-height: 16px;
    color: #888;
    background: linear-gradient(#888, #888) right center / 1px 13px no-repeat;
  }
  .tab:last-child {
    background: none;
  }
  .tab.active {
    background: #fff;
    color: #000;
    border: 1px solid #000;
    border-top: 0;
    padding: 0 9px 0 10px;
  }
  .page {
    width: 16px;
    height: 17px;
  }
</style>
